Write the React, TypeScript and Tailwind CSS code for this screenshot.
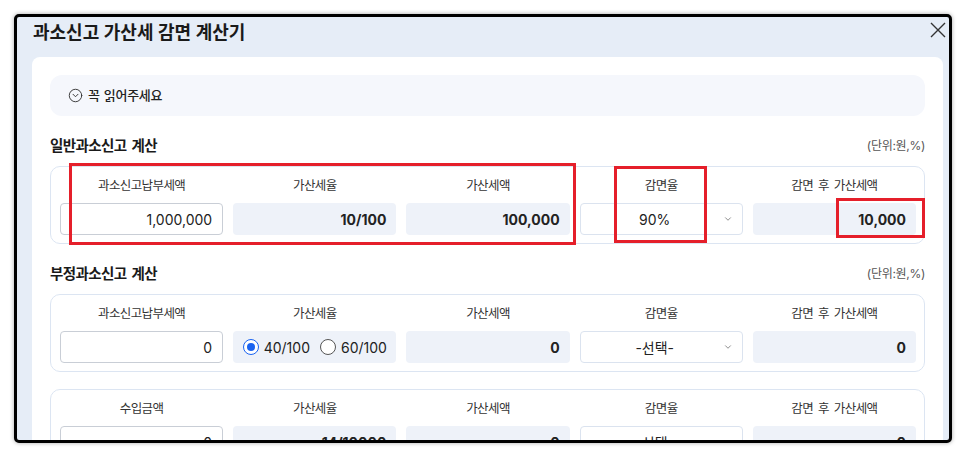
import { ChevronDown, CircleChevronDown } from 'lucide-react';

type Cell =
  | { kind: 'input'; value: string }
  | { kind: 'output'; value: string }
  | { kind: 'select'; value: string }
  | { kind: 'radio'; options: string[]; checked: number };

type Section = {
  title?: string;
  labels: string[];
  cells: Cell[];
};

const sections: Section[] = [
  {
    title: '일반과소신고 계산',
    labels: ['과소신고납부세액', '가산세율', '가산세액', '감면율', '감면 후 가산세액'],
    cells: [
      { kind: 'input', value: '1,000,000' },
      { kind: 'output', value: '10/100' },
      { kind: 'output', value: '100,000' },
      { kind: 'select', value: '90%' },
      { kind: 'output', value: '10,000' },
    ],
  },
  {
    title: '부정과소신고 계산',
    labels: ['과소신고납부세액', '가산세율', '가산세액', '감면율', '감면 후 가산세액'],
    cells: [
      { kind: 'input', value: '0' },
      { kind: 'radio', options: ['40/100', '60/100'], checked: 0 },
      { kind: 'output', value: '0' },
      { kind: 'select', value: '-선택-' },
      { kind: 'output', value: '0' },
    ],
  },
  {
    labels: ['수입금액', '가산세율', '가산세액', '감면율', '감면 후 가산세액'],
    cells: [
      { kind: 'input', value: '0' },
      { kind: 'output', value: '14/10000' },
      { kind: 'output', value: '0' },
      { kind: 'select', value: '-선택-' },
      { kind: 'output', value: '0' },
    ],
  },
];

const Field = ({ cell }: { cell: Cell }) => {
  if (cell.kind === 'input') {
    return (
      <div className="flex h-[32px] items-center justify-end rounded-[4px] border border-[#c9ced6] bg-white pr-[10px] text-[14px] text-[#222]">
        {cell.value}
      </div>
    );
  }
  if (cell.kind === 'output') {
    return (
      <div className="flex h-[32px] items-center justify-end rounded-[4px] bg-[#eef2f9] pr-[10px] text-[14px] font-bold text-[#222]">
        {cell.value}
      </div>
    );
  }
  if (cell.kind === 'select') {
    return (
      <div className="flex h-[32px] items-center rounded-[4px] border border-[#dbe3ef] bg-white pl-[6px] pr-[9px] text-[14px] text-[#222]">
        <span className="flex-1 text-center">{cell.value}</span>
        <ChevronDown size={10} strokeWidth={1.6} className="text-[#555]" />
      </div>
    );
  }
  return (
    <div className="flex h-[32px] items-center justify-center gap-[10px] rounded-[4px] bg-[#eef2f9] text-[14px] text-[#222]">
      {cell.options.map((opt, i) => (
        <label key={opt} className="flex items-center gap-[5px]">
          {i === cell.checked ? (
            <span className="flex h-[16px] w-[16px] items-center justify-center rounded-full border-[1.5px] border-[#1a63f0] bg-white">
              <span className="h-[8px] w-[8px] rounded-full bg-[#1a63f0]" />
            </span>
          ) : (
            <span className="h-[16px] w-[16px] rounded-full border border-[#555] bg-white" />
          )}
          {opt}
        </label>
      ))}
    </div>
  );
};

const Card = ({ section }: { section: Section }) => (
  <div className="rounded-[10px] border border-[#dce5f2] pb-[8px] pl-[9px] pr-[8px] pt-[11px]">
    <div className="grid grid-cols-5 gap-x-[10px] gap-y-[9px]">
      {section.labels.map((l, i) => (
        <div
          key={i}
          className="h-[16px] text-center text-[12.5px] leading-[16px] tracking-[-0.6px] text-[#333] [word-spacing:2px]"
        >
          {l}
        </div>
      ))}
      {section.cells.map((c, i) => (
        <Field key={i} cell={c} />
      ))}
    </div>
  </div>
);

export default function App() {
  return (
    <div className="relative h-[458px] w-[966px] overflow-hidden bg-white pl-[14px] pt-[14px] font-['Inter','Noto_Sans_CJK_KR',sans-serif]">
      <div className="flex h-[429px] w-[938px] flex-col overflow-hidden rounded-[5px] border-[3px] border-black bg-[#e6edf7] shadow-[0_0_4px_rgba(0,0,0,0.35)]">
        <div className="flex h-[40px] shrink-0 items-start justify-between pl-[16px] pr-[3px]">
          <h1 className="mt-[2px] text-[18px] font-semibold leading-[28px] text-[#1a1a1a]">과소신고 가산세 감면 계산기</h1>
          <svg width="16" height="16" viewBox="0 0 16 16" className="mt-[5px] text-[#333]">
            <path d="M1 1L15 15M15 1L1 15" stroke="currentColor" strokeWidth="1.4" fill="none" />
          </svg>
        </div>
        <div className="min-h-0 flex-1 pl-[15px] pr-[6px]">
          <div className="h-full rounded-t-[8px] bg-white px-[18px] pt-[18px]">
            <div className="flex h-[41px] items-center gap-[5px] rounded-[12px] bg-[#f5f7fc] pl-[18px] text-[13px] font-medium tracking-[-0.3px] text-[#222] [word-spacing:1px]">
              <CircleChevronDown size={15} strokeWidth={1.5} className="text-[#333]" />
              꼭 읽어주세요
            </div>
            {sections.map((s, i) => (
              <div key={i} className={s.title ? '' : 'mt-[17px]'}>
                {s.title && (
                  <div className="mb-[11px] mt-[21px] flex h-[18px] items-center justify-between">
                    <span className="text-[14.5px] font-semibold tracking-[-0.6px] text-[#1a1a1a] [word-spacing:2px]">
                      {s.title}
                    </span>
                    <span className="text-[12px] tracking-[-0.3px] text-[#555]">(단위:원,%)</span>
                  </div>
                )}
                <Card section={s} />
              </div>
            ))}
          </div>
        </div>
      </div>

      {/* red callouts over the first row */}
      <div className="absolute left-[69px] top-[163px] h-[82px] w-[507px] border-[3px] border-[#e51f2a]" />
      <div className="absolute left-[614px] top-[166px] h-[77px] w-[93px] border-[3px] border-[#e51f2a]" />
      <div className="absolute left-[836px] top-[198px] h-[40px] w-[89px] border-[3px] border-[#e51f2a]" />
    </div>
  );
}
